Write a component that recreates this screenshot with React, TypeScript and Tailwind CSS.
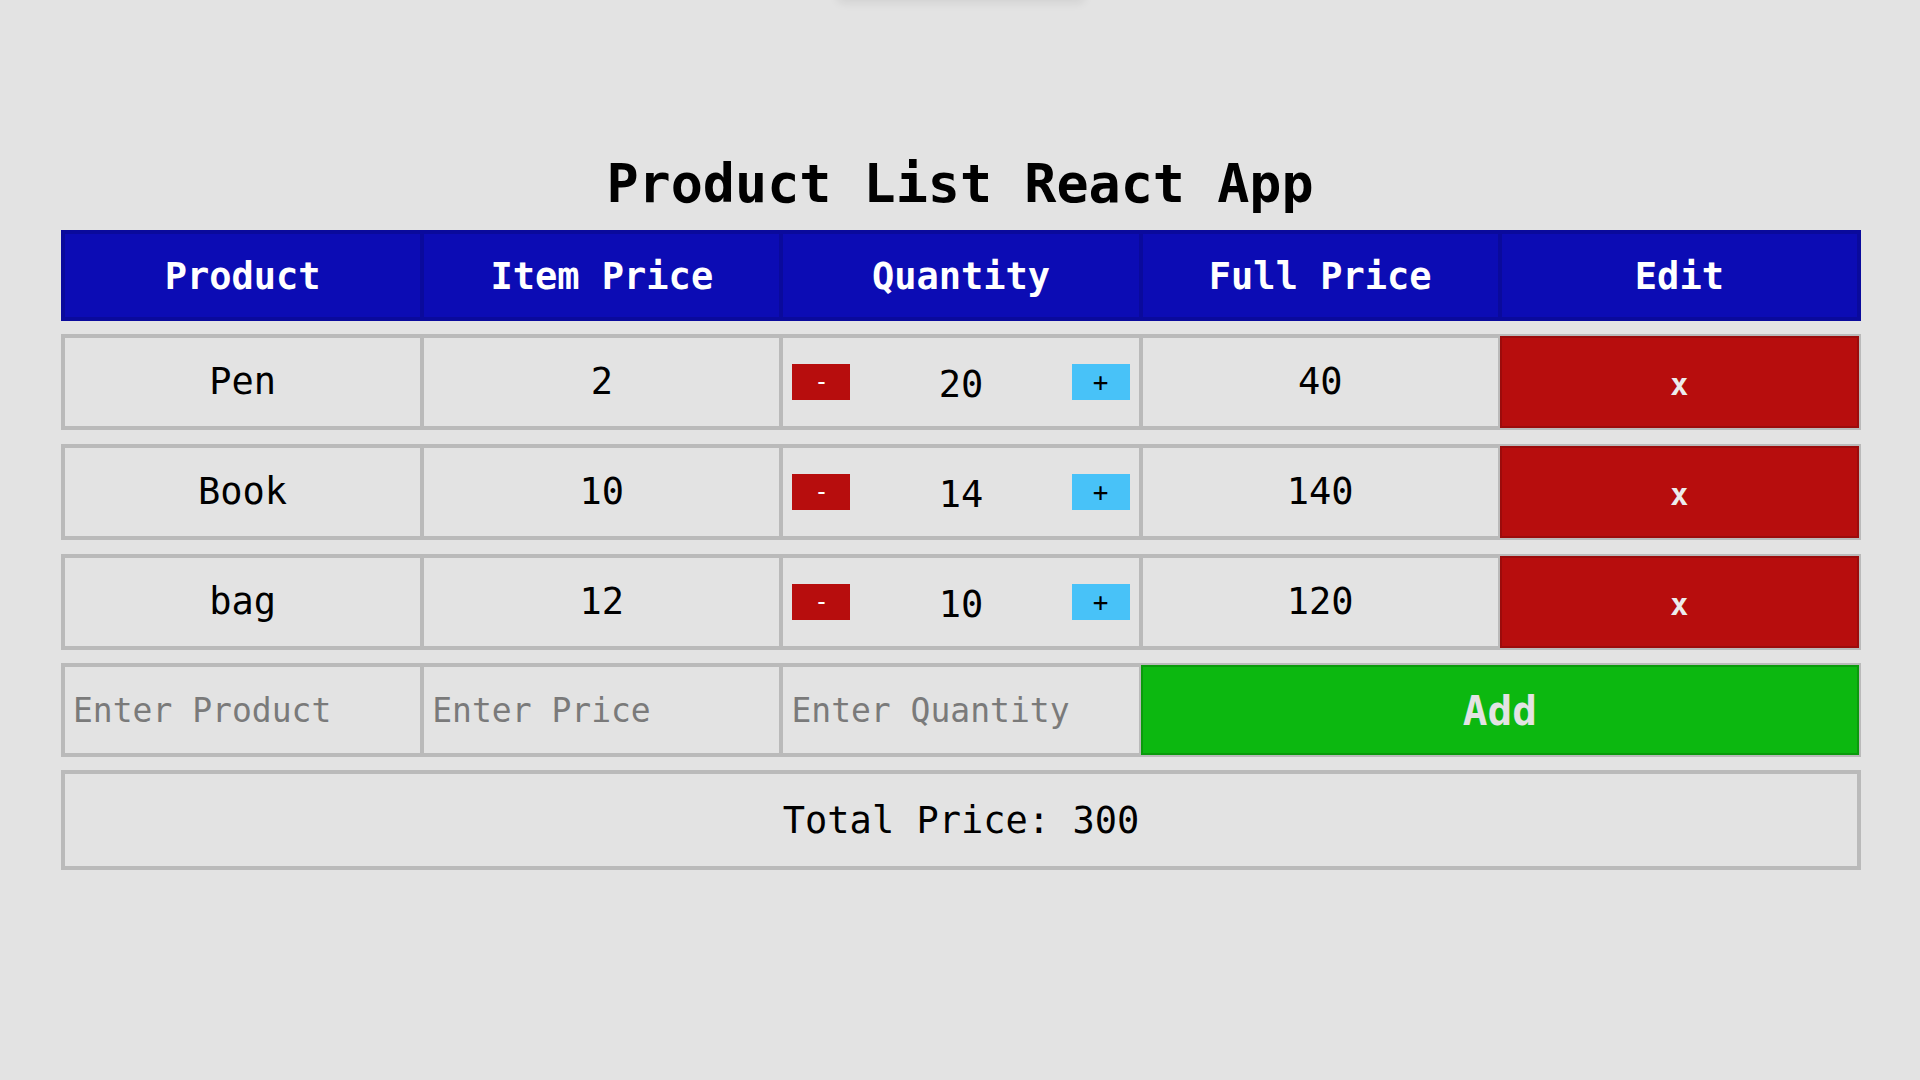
import { useState } from 'react'

type Item = { name: string; price: number; qty: number }

const initial: Item[] = [
  { name: 'Pen', price: 2, qty: 20 },
  { name: 'Book', price: 10, qty: 14 },
  { name: 'bag', price: 12, qty: 10 },
]

const headers = ['Product', 'Item Price', 'Quantity', 'Full Price', 'Edit']

export default function App() {
  const [items, setItems] = useState<Item[]>(initial)
  const total = items.reduce((sum, i) => sum + i.price * i.qty, 0)

  const change = (idx: number, d: number) =>
    setItems((prev) => prev.map((it, i) => (i === idx ? { ...it, qty: Math.max(0, it.qty + d) } : it)))

  return (
    <div className="relative min-h-screen bg-[#e3e3e3] pt-[157px] font-['DejaVu_Sans_Mono',monospace] text-black">
      {/* faint shadow of something parked above the viewport */}
      <div className="absolute left-[837px] top-[-30px] h-[30px] w-[248px] rounded-md shadow-[0_3px_10px_rgba(0,0,0,0.08)]" />

      <h1 className="mb-[20px] text-center text-[53.4px] font-bold leading-none">Product List React App</h1>

      <div className="ml-[61px] w-[1800px]">
        <div className="grid h-[91px] grid-cols-5 border-2 border-[#0a0a9c] bg-[#0c0cb4]">
          {headers.map((h) => (
            <div key={h} className="flex items-center justify-center border-2 border-[#0a0a9c] pt-[2px] text-[37px] font-bold text-white">
              {h}
            </div>
          ))}
        </div>

        <div className="mt-[13px] flex flex-col gap-[14px]">
          {items.map((it, idx) => (
            <div key={it.name} className="grid h-[96px] grid-cols-5 border-2 border-[#bababa] text-[37px]">
              <div className="flex items-center justify-center border-2 border-[#bababa] pb-[2px]">{it.name}</div>
              <div className="flex items-center justify-center border-2 border-[#bababa] pb-[2px]">{it.price}</div>
              <div className="flex items-center justify-between border-2 border-[#bababa] px-[9px]">
                <button
                  onClick={() => change(idx, -1)}
                  className="flex h-[36px] w-[58px] items-center justify-center bg-[#b70d0d] text-[24px] leading-none text-white"
                >
                  -
                </button>
                <span className="pt-[4px]">{it.qty}</span>
                <button
                  onClick={() => change(idx, 1)}
                  className="flex h-[36px] w-[58px] items-center justify-center bg-[#48c2f8] text-[26px] leading-none text-black"
                >
                  +
                </button>
              </div>
              <div className="flex items-center justify-center border-2 border-[#bababa] pb-[2px]">{it.price * it.qty}</div>
              <button
                onClick={() => setItems((prev) => prev.filter((_, i) => i !== idx))}
                className="flex items-center justify-center border-2 border-[#9c0b0b] bg-[#b70d0d] pt-[4px] text-[30px] font-bold text-[#ececec]"
              >
                x
              </button>
            </div>
          ))}
        </div>

        <div className="mt-[13px] grid h-[94px] grid-cols-5 border-2 border-[#bababa] text-[33px]">
          {['Enter Product', 'Enter Price', 'Enter Quantity'].map((p) => (
            <div key={p} className="flex items-center border-2 border-[#bababa]">
              <input
                placeholder={p}
                className="h-full w-full bg-transparent px-[8px] text-black outline-none placeholder:text-[#7a7a7a]"
              />
            </div>
          ))}
          <button className="col-span-2 flex items-center justify-center border-2 border-[#0a9a0c] bg-[#0cb810] pt-[2px] text-[41px] font-bold text-[#e3e3e3]">
            Add
          </button>
        </div>

        <div className="mt-[13px] flex h-[100px] items-center justify-center border-4 border-[#bababa] text-[37px]">
          Total Price: {total}
        </div>
      </div>
    </div>
  )
}
